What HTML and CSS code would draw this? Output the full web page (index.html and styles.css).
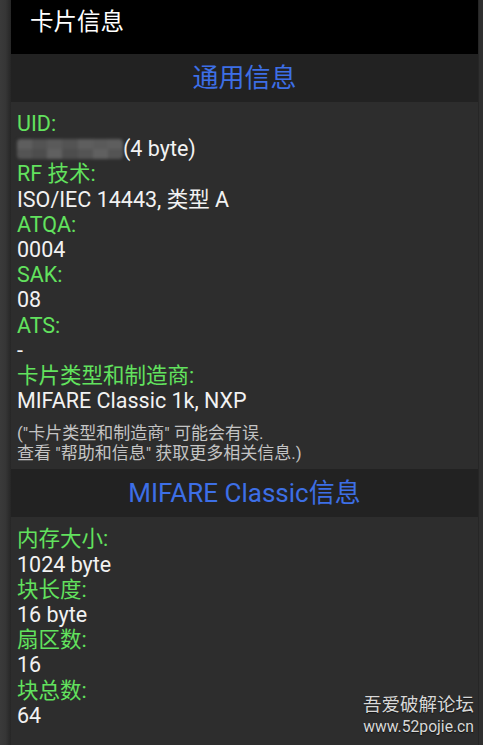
FILE: index.html
```html
<!DOCTYPE html>
<html lang="zh">
<head>
<meta charset="utf-8">
<title>卡片信息</title>
<link rel="stylesheet" href="styles.css">
</head>
<body>
<div class="frame">
  <div class="edge-left"></div>
  <main class="main">
    <header class="titlebar">卡片信息</header>
    <h2 class="section-head">通用信息</h2>
    <section class="content">
      <div class="label">UID:</div>
      <div class="value"><span class="blur"><i></i><i></i><i></i><i></i><i></i><i></i><i></i></span>(4 byte)</div>
      <div class="label">RF 技术:</div>
      <div class="value">ISO/IEC 14443, 类型 A</div>
      <div class="label">ATQA:</div>
      <div class="value">0004</div>
      <div class="label">SAK:</div>
      <div class="value">08</div>
      <div class="label">ATS:</div>
      <div class="value">-</div>
      <div class="label">卡片类型和制造商:</div>
      <div class="value">MIFARE Classic 1k, NXP</div>
      <p class="note">("卡片类型和制造商" 可能会有误.<br>查看 "帮助和信息" 获取更多相关信息.)</p>
    </section>
    <h2 class="section-head">MIFARE Classic信息</h2>
    <section class="content">
      <div class="label">内存大小:</div>
      <div class="value">1024 byte</div>
      <div class="label">块长度:</div>
      <div class="value">16 byte</div>
      <div class="label">扇区数:</div>
      <div class="value">16</div>
      <div class="label">块总数:</div>
      <div class="value">64</div>
    </section>
  </main>
  <div class="edge-right"></div>
</div>
<div class="watermark">
  <div class="wm-title">吾爱破解论坛</div>
  <div class="wm-url">www.52pojie.cn</div>
</div>
</body>
</html>
```
FILE: styles.css
```css
html, body {
  margin: 0;
  padding: 0;
  height: 100%;
}
body {
  background: #2d2d2d;
  font-family: Roboto, "Noto Sans CJK SC", sans-serif;
  overflow: hidden;
}
.frame {
  display: flex;
  min-height: 745px;
}
.edge-left {
  width: 11px;
  flex: none;
  background: linear-gradient(to right, #3a3a3a 0%, #363636 50%, #262626 100%);
}
.edge-right {
  width: 4px;
  flex: none;
  background: #2f2f2f;
  border-left: 1px solid #262626;
}
.main {
  flex: 1;
  background: #2d2d2d;
  display: flex;
  flex-direction: column;
}
.titlebar {
  height: 54px;
  background: #000;
  color: #fff;
  font-size: 23.5px;
  line-height: 44px;
  padding-left: 19px;
}
.section-head {
  margin: 0;
  height: 48px;
  background: #222222;
  color: #3d6fe6;
  font-size: 26px;
  font-weight: normal;
  line-height: 48px;
  text-align: center;
}
.content {
  padding: 9px 6px 6px;
}
.label, .value {
  font-size: 21.5px;
  line-height: 25.2px;
  white-space: nowrap;
}
.label {
  color: #62e25e;
}
.value {
  color: #f2f2f2;
}
.blur {
  display: inline-flex;
  vertical-align: -3px;
  width: 106px;
  height: 20px;
  border-radius: 4px;
  overflow: hidden;
  filter: blur(1.5px);
}
.blur i {
  flex: 1;
  background: linear-gradient(#5e5e5e 0 50%, #545454 50% 100%);
}
.blur i:nth-child(2n) {
  background: linear-gradient(#535353 0 50%, #4d4d4d 50% 100%);
}
.blur i:nth-child(3n) {
  background: linear-gradient(#5a5a5a 0 50%, #606060 50% 100%);
}
.note {
  margin: 10px 0 0;
  color: #c4c4c4;
  font-size: 17px;
  line-height: 20px;
}
.watermark {
  position: absolute;
  right: 9px;
  bottom: 8px;
  text-align right;
  text-align: right;
  color: #d8d8d8;
  text-shadow: 0 1px 1px rgba(0,0,0,0.6);
}
.wm-title {
  font-size: 18.5px;
  line-height: 24px;
}
.wm-url {
  font-size: 15.7px;
  line-height: 20px;
}
```
